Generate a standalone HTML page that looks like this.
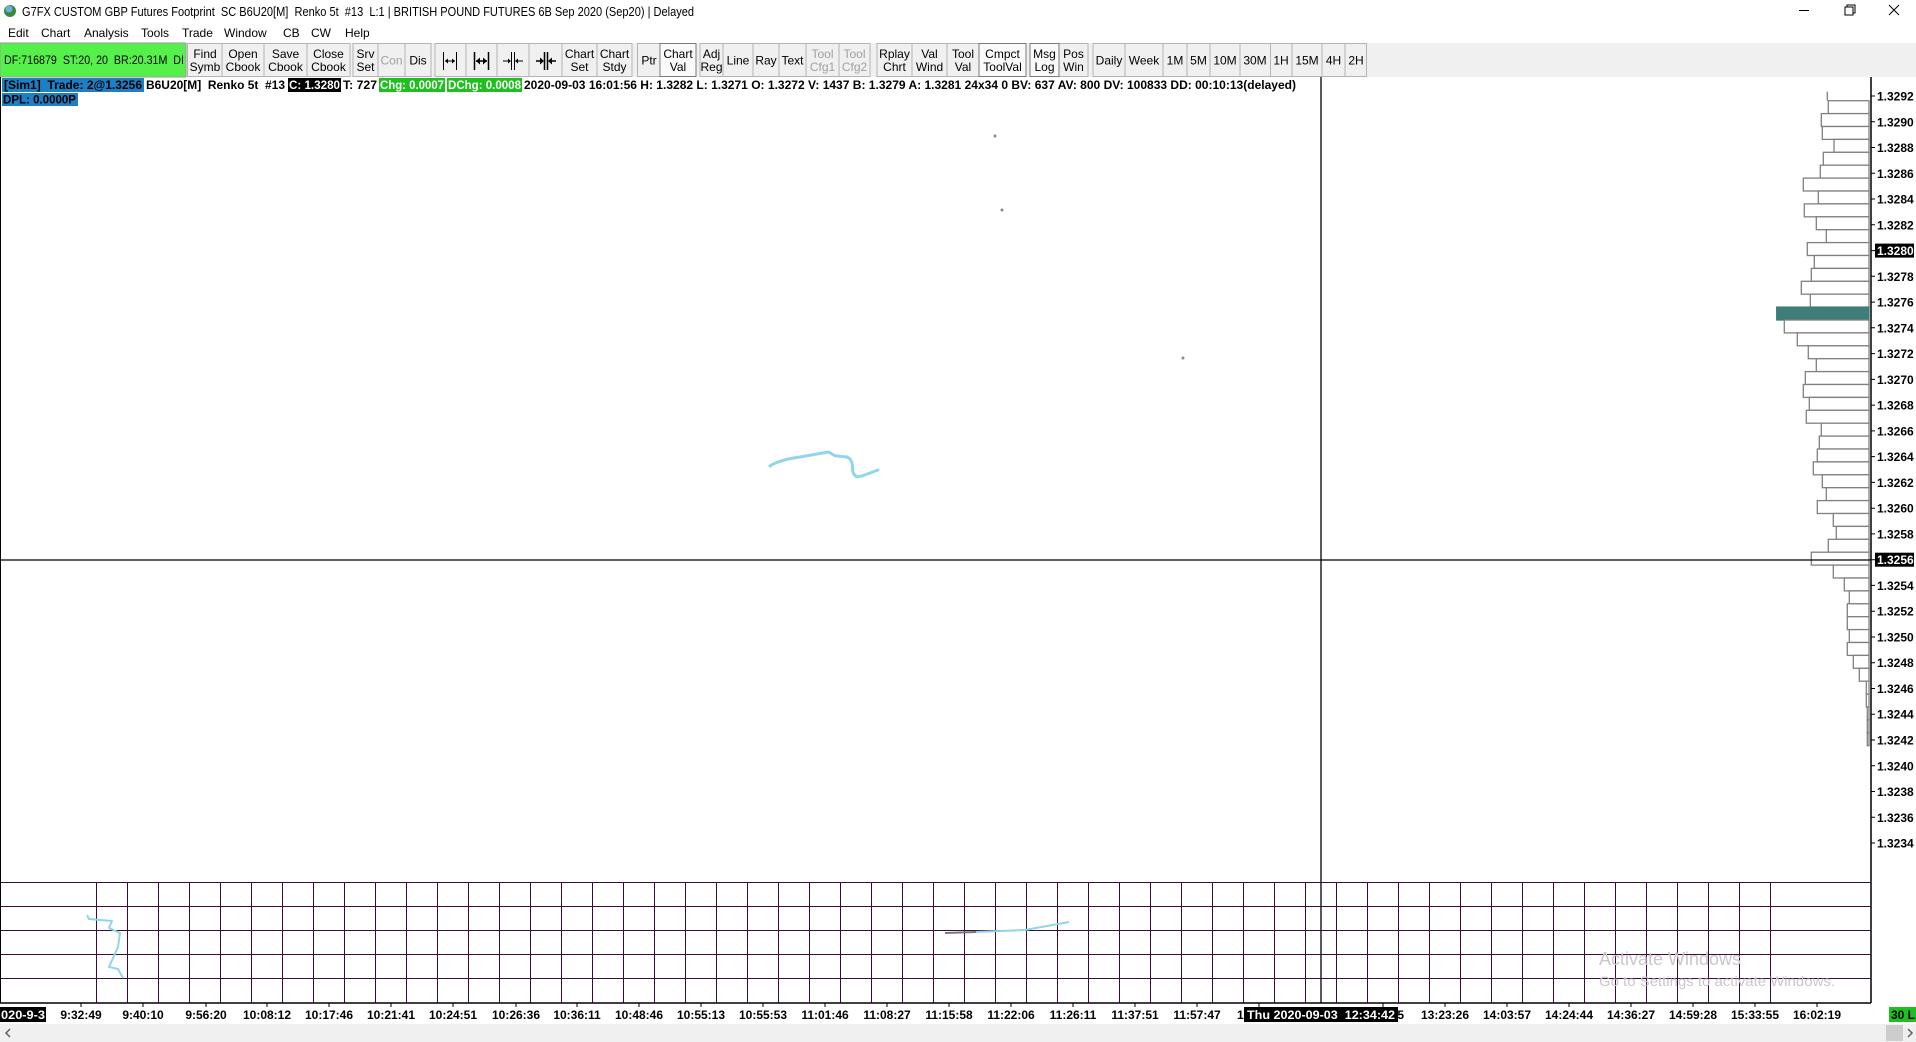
<!DOCTYPE html>
<html><head><meta charset="utf-8"><style>
html,body{margin:0;padding:0;width:1916px;height:1042px;overflow:hidden;background:#fff}
svg{display:block}
text{font-family:"Liberation Sans",Arial,sans-serif;font-size:12px;fill:#000;white-space:pre}
.b{font-weight:bold}
.g{fill:#a0a0a0}
</style></head><body>
<svg width="1916" height="1042" viewBox="0 0 1916 1042" xmlns="http://www.w3.org/2000/svg" xml:space="preserve">
<rect x="0" y="0" width="1916" height="43" fill="#fff"/>
<circle cx="10" cy="11" r="6" fill="#3a8a3a"/><circle cx="9" cy="9" r="3.5" fill="#6ab0e0"/>
<text x="22" y="16" textLength="672" lengthAdjust="spacingAndGlyphs" style="font-size:13px">G7FX CUSTOM GBP Futures Footprint  SC B6U20[M]  Renko 5t  #13  L:1 | BRITISH POUND FUTURES 6B Sep 2020 (Sep20) | Delayed</text>
<line x1="1799" y1="10.5" x2="1809" y2="10.5" stroke="#000"/>
<rect x="1845" y="7" width="8" height="8" fill="none" stroke="#000"/><path d="M1847 7 V5 H1855 V13 H1853" fill="none" stroke="#000"/>
<path d="M1889 5 L1899 15 M1899 5 L1889 15" stroke="#000"/>
<text x="8" y="37">Edit</text><text x="41" y="37">Chart</text><text x="84" y="37">Analysis</text><text x="141" y="37">Tools</text><text x="182" y="37">Trade</text><text x="224" y="37">Window</text><text x="283" y="37">CB</text><text x="311" y="37">CW</text><text x="345" y="37">Help</text>
<rect x="0" y="43" width="1916" height="34" fill="#f0f0f0"/>
<rect x="0" y="43" width="186" height="34" fill="#55f04a" stroke="#9a9a9a"/>
<text x="4" y="64" textLength="180" lengthAdjust="spacingAndGlyphs">DF:716879  ST:20, 20  BR:20.31M  DI</text>
<g fill="#f0f0f0" stroke="#b4b4b4">
<rect x="187.5" y="43.5" width="34.5" height="33"/><rect x="222" y="43.5" width="42" height="33"/><rect x="264" y="43.5" width="43" height="33"/><rect x="307" y="43.5" width="43" height="33"/>
<rect x="353" y="43.5" width="25" height="33"/><rect x="378" y="43.5" width="27" height="33"/><rect x="405" y="43.5" width="26" height="33"/>
<rect x="435" y="43.5" width="31" height="33"/><rect x="466" y="43.5" width="31" height="33"/><rect x="497" y="43.5" width="32" height="33"/><rect x="529" y="43.5" width="33" height="33"/><rect x="562" y="43.5" width="35" height="33"/><rect x="597" y="43.5" width="35" height="33"/>
<rect x="637.5" y="43.5" width="22.5" height="33"/>
<rect x="700" y="43.5" width="23" height="33"/><rect x="723" y="43.5" width="30" height="33"/><rect x="753" y="43.5" width="26" height="33"/><rect x="779" y="43.5" width="27" height="33"/><rect x="806" y="43.5" width="33" height="33"/><rect x="839" y="43.5" width="31" height="33"/>
<rect x="877" y="43.5" width="35" height="33"/><rect x="912" y="43.5" width="35" height="33"/><rect x="947" y="43.5" width="32" height="33"/><rect x="1059" y="43.5" width="29" height="33"/>
<rect x="1093" y="43.5" width="32" height="33"/><rect x="1125" y="43.5" width="38" height="33"/><rect x="1163" y="43.5" width="24" height="33"/><rect x="1187" y="43.5" width="23" height="33"/><rect x="1210" y="43.5" width="30" height="33"/><rect x="1240" y="43.5" width="30.5" height="33"/><rect x="1270.5" y="43.5" width="21.5" height="33"/><rect x="1292" y="43.5" width="30" height="33"/><rect x="1322" y="43.5" width="23" height="33"/><rect x="1345" y="43.5" width="21.5" height="33"/>
</g>
<g fill="#fafafa" stroke="#7a7a7a">
<rect x="660" y="43.5" width="36" height="33"/><rect x="979" y="43.5" width="47" height="33"/><rect x="1030" y="43.5" width="29" height="33"/>
</g>
<g text-anchor="middle">
<text x="205" y="58">Find</text><text x="205" y="71">Symb</text>
<text x="243" y="58">Open</text><text x="243" y="71">Cbook</text>
<text x="285.5" y="58">Save</text><text x="285.5" y="71">Cbook</text>
<text x="328.5" y="58">Close</text><text x="328.5" y="71">Cbook</text>
<text x="365.5" y="58">Srv</text><text x="365.5" y="71">Set</text>
<text x="391.5" y="64.5" class="g">Con</text>
<text x="418" y="64.5">Dis</text>
<text x="579.5" y="58">Chart</text><text x="579.5" y="71">Set</text>
<text x="614.5" y="58">Chart</text><text x="614.5" y="71">Stdy</text>
<text x="649" y="64.5">Ptr</text>
<text x="678" y="58">Chart</text><text x="678" y="71">Val</text>
<text x="711.5" y="58">Adj</text><text x="711.5" y="71">Reg</text>
<text x="738" y="64.5">Line</text><text x="766" y="64.5">Ray</text><text x="792.5" y="64.5">Text</text>
<text x="822.5" y="58" class="g">Tool</text><text x="822.5" y="71" class="g">Cfg1</text>
<text x="854.5" y="58" class="g">Tool</text><text x="854.5" y="71" class="g">Cfg2</text>
<text x="894.5" y="58">Rplay</text><text x="894.5" y="71">Chrt</text>
<text x="929.5" y="58">Val</text><text x="929.5" y="71">Wind</text>
<text x="963" y="58">Tool</text><text x="963" y="71">Val</text>
<text x="1002.5" y="58">Cmpct</text><text x="1002.5" y="71">ToolVal</text>
<text x="1044.5" y="58">Msg</text><text x="1044.5" y="71">Log</text>
<text x="1073.5" y="58">Pos</text><text x="1073.5" y="71">Win</text>
<text x="1109" y="64.5">Daily</text><text x="1144" y="64.5">Week</text><text x="1175" y="64.5">1M</text><text x="1198.5" y="64.5">5M</text><text x="1225" y="64.5">10M</text><text x="1255" y="64.5">30M</text><text x="1281" y="64.5">1H</text><text x="1307" y="64.5">15M</text><text x="1333.5" y="64.5">4H</text><text x="1356" y="64.5">2H</text>
</g>
<g stroke="#000" stroke-width="1" fill="#000">
<path d="M443.5 52 V70 M456.5 52 V70 M445 61 H455" fill="none"/><path d="M445 61 l3 -2.5 v5z M455 61 l-3 -2.5 v5z" stroke="none"/>
<path d="M474.5 52 V70 M488.5 52 V70 M476 61 H487" fill="none" stroke-width="1.5"/><path d="M476 61 l4 -3.5 v7z M487 61 l-4 -3.5 v7z" stroke="none"/>
<path d="M511.5 52 V70 M514.5 52 V70 M503 61 H510 M516 61 H523" fill="none"/><path d="M511 61 l-3 -2.5 v5z M515 61 l3 -2.5 v5z" stroke="none"/>
<path d="M544.5 52 V70 M547.5 52 V70 M536 61 H543 M549 61 H556" fill="none" stroke-width="1.5"/><path d="M544 61 l-4 -3.5 v7z M548 61 l4 -3.5 v7z" stroke="none"/>
</g>
<rect x="2" y="78" width="142" height="14" fill="#1f7fc4"/>
<text x="4" y="89" class="b" textLength="138" lengthAdjust="spacingAndGlyphs">[Sim1]  Trade: 2@1.3256</text>
<text x="146" y="89" class="b" textLength="139" lengthAdjust="spacingAndGlyphs">B6U20[M]  Renko 5t  #13</text>
<rect x="288" y="78" width="53" height="14" fill="#000"/>
<text x="289" y="89" class="b" style="fill:#fff" textLength="51" lengthAdjust="spacingAndGlyphs">C: 1.3280</text>
<text x="343" y="89" class="b" textLength="34" lengthAdjust="spacingAndGlyphs">T: 727</text>
<rect x="379" y="78" width="66" height="14" fill="#1fbf1f"/>
<text x="380" y="89" class="b" style="fill:#fff" textLength="64" lengthAdjust="spacingAndGlyphs">Chg: 0.0007</text>
<rect x="447" y="78" width="75" height="14" fill="#1fbf1f"/>
<text x="448" y="89" class="b" style="fill:#fff" textLength="73" lengthAdjust="spacingAndGlyphs">DChg: 0.0008</text>
<text x="524" y="89" class="b" textLength="772" lengthAdjust="spacingAndGlyphs">2020-09-03 16:01:56 H: 1.3282 L: 1.3271 O: 1.3272 V: 1437 B: 1.3279 A: 1.3281 24x34 0 BV: 637 AV: 800 DV: 100833 DD: 00:10:13(delayed)</text>
<rect x="2" y="93" width="76" height="13" fill="#1f7fc4"/>
<text x="3" y="103.5" class="b" textLength="73" lengthAdjust="spacingAndGlyphs">DPL: 0.0000P</text>
<g fill="#888"><circle cx="995" cy="136" r="1.5"/><circle cx="1002" cy="210" r="1.5"/><circle cx="1183" cy="358" r="1.5"/></g>
<path d="M770 466 C776 462 785 459 800 457 L828 452 C832 453 833 456 837 456 L847 457 C854 460 852 468 853 472 C855 478 858 477 862 476 L878 470" fill="none" stroke="#8fd6ea" stroke-width="3" stroke-linecap="round"/>
<g fill="#fff" stroke="#808080" stroke-width="1.3">
<path d="M1827.3 91.7 V100.7" fill="none"/>
<rect x="1828.3" y="100.7" width="40.7" height="12.9"/><rect x="1821.3" y="113.6" width="47.7" height="12.9"/><rect x="1822.3" y="126.5" width="46.7" height="12.9"/><rect x="1834" y="139.4" width="35" height="12.9"/><rect x="1823.3" y="152.3" width="45.7" height="12.9"/><rect x="1820.3" y="165.2" width="48.7" height="12.9"/><rect x="1803.3" y="178.1" width="65.7" height="12.9"/><rect x="1818.3" y="191" width="50.7" height="12.9"/><rect x="1804.3" y="203.9" width="64.7" height="12.9"/><rect x="1816.3" y="216.8" width="52.7" height="12.9"/><rect x="1826.3" y="229.7" width="42.7" height="12.9"/><rect x="1807.3" y="242.6" width="61.7" height="12.9"/><rect x="1814.3" y="255.5" width="54.7" height="12.9"/><rect x="1811.3" y="268.4" width="57.7" height="12.9"/><rect x="1801.3" y="281.3" width="67.7" height="12.9"/><rect x="1810.3" y="294.2" width="58.7" height="12.9"/>
<rect x="1776.7" y="307.1" width="92.3" height="12.9" fill="#3f7d79" stroke="#3f7d79"/>
<rect x="1784.3" y="320" width="84.7" height="12.9"/><rect x="1797.3" y="332.9" width="71.7" height="12.9"/><rect x="1808.3" y="345.8" width="60.7" height="12.9"/><rect x="1816.3" y="358.7" width="52.7" height="12.9"/><rect x="1805.3" y="371.6" width="63.7" height="12.9"/><rect x="1803.3" y="384.5" width="65.7" height="12.9"/><rect x="1809.3" y="397.4" width="59.7" height="12.9"/><rect x="1806.3" y="410.3" width="62.7" height="12.9"/><rect x="1821.3" y="423.2" width="47.7" height="12.9"/><rect x="1819.3" y="436.1" width="49.7" height="12.9"/><rect x="1817.3" y="449" width="51.7" height="12.9"/><rect x="1813.3" y="461.9" width="55.7" height="12.9"/><rect x="1822.3" y="474.8" width="46.7" height="12.9"/><rect x="1826.3" y="487.7" width="42.7" height="12.9"/><rect x="1817.3" y="500.6" width="51.7" height="12.9"/><rect x="1833.3" y="513.5" width="35.7" height="12.9"/><rect x="1836.3" y="526.4" width="32.7" height="12.9"/><rect x="1828.3" y="539.3" width="40.7" height="12.9"/><rect x="1811.3" y="552.2" width="57.7" height="12.9"/><rect x="1833.3" y="565.1" width="35.7" height="12.9"/><rect x="1844.3" y="578" width="24.7" height="12.9"/><rect x="1849.3" y="590.9" width="19.7" height="12.9"/><rect x="1847.3" y="603.8" width="21.7" height="12.9"/><rect x="1847.3" y="616.7" width="21.7" height="12.9"/><rect x="1849.3" y="629.6" width="19.7" height="12.9"/><rect x="1847.3" y="642.5" width="21.7" height="12.9"/><rect x="1853.3" y="655.4" width="15.7" height="12.9"/><rect x="1859.3" y="668.3" width="9.7" height="12.9"/><rect x="1866.3" y="681.2" width="2.7" height="12.9"/><rect x="1866.3" y="694.1" width="2.7" height="12.9"/><rect x="1867.3" y="707" width="1.7" height="12.9"/><rect x="1867.3" y="719.9" width="1.7" height="12.9"/><rect x="1867.3" y="732.8" width="1.7" height="12.9"/>
</g>
<line x1="1871" y1="77" x2="1871" y2="1003" stroke="#000" stroke-width="1.5"/>
<g stroke="#000"><path d="M1871 96H1875M1871 121.8H1875M1871 147.5H1875M1871 173.3H1875M1871 199H1875M1871 224.8H1875M1871 250.6H1875M1871 276.3H1875M1871 302.1H1875M1871 327.8H1875M1871 353.6H1875M1871 379.4H1875M1871 405.1H1875M1871 430.9H1875M1871 456.6H1875M1871 482.4H1875M1871 508.2H1875M1871 533.9H1875M1871 559.7H1875M1871 585.4H1875M1871 611.2H1875M1871 637H1875M1871 662.7H1875M1871 688.5H1875M1871 714.2H1875M1871 740H1875M1871 765.8H1875M1871 791.5H1875M1871 817.3H1875M1871 843H1875"/></g>
<rect x="1875" y="243.6" width="39" height="14" fill="#000"/><rect x="1875" y="552.7" width="39" height="14" fill="#000"/>
<g style="font-weight:bold">
<text x="1877" y="100.5">1.3292</text><text x="1877" y="126.3">1.3290</text><text x="1877" y="152">1.3288</text><text x="1877" y="177.8">1.3286</text><text x="1877" y="203.5">1.3284</text><text x="1877" y="229.3">1.3282</text><text x="1877" y="255.1" style="fill:#fff">1.3280</text><text x="1877" y="280.8">1.3278</text><text x="1877" y="306.6">1.3276</text><text x="1877" y="332.3">1.3274</text><text x="1877" y="358.1">1.3272</text><text x="1877" y="383.9">1.3270</text><text x="1877" y="409.6">1.3268</text><text x="1877" y="435.4">1.3266</text><text x="1877" y="461.1">1.3264</text><text x="1877" y="486.9">1.3262</text><text x="1877" y="512.7">1.3260</text><text x="1877" y="538.4">1.3258</text><text x="1877" y="564.2" style="fill:#fff">1.3256</text><text x="1877" y="589.9">1.3254</text><text x="1877" y="615.7">1.3252</text><text x="1877" y="641.5">1.3250</text><text x="1877" y="667.2">1.3248</text><text x="1877" y="693">1.3246</text><text x="1877" y="718.7">1.3244</text><text x="1877" y="744.5">1.3242</text><text x="1877" y="770.3">1.3240</text><text x="1877" y="796">1.3238</text><text x="1877" y="821.8">1.3236</text><text x="1877" y="847.5">1.3234</text>
</g>
<g stroke="#3a0a3a" stroke-width="1" shape-rendering="crispEdges">
<path d="M0 882.5H1871M0 906.5H1871M0 930.5H1871M0 954.5H1871M0 978.5H1871"/>
<path d="M96.5 882V1003M127.5 882V1003M158.5 882V1003M189.5 882V1003M220.5 882V1003M251.5 882V1003M282.5 882V1003M313.5 882V1003M344.5 882V1003M375.5 882V1003M406.5 882V1003M437.5 882V1003M468.5 882V1003M499.5 882V1003M530.5 882V1003M561.5 882V1003M592.5 882V1003M623.5 882V1003M654.5 882V1003M685.5 882V1003M716.5 882V1003M747.5 882V1003M778.5 882V1003M809.5 882V1003M840.5 882V1003M871.5 882V1003M902.5 882V1003M933.5 882V1003M964.5 882V1003M995.5 882V1003M1026.5 882V1003M1057.5 882V1003M1088.5 882V1003M1119.5 882V1003M1150.5 882V1003M1181.5 882V1003M1212.5 882V1003M1243.5 882V1003M1274.5 882V1003M1305.5 882V1003M1336.5 882V1003M1367.5 882V1003M1398.5 882V1003M1429.5 882V1003M1460.5 882V1003M1491.5 882V1003M1522.5 882V1003M1553.5 882V1003M1584.5 882V1003M1615.5 882V1003M1646.5 882V1003M1677.5 882V1003M1708.5 882V1003M1739.5 882V1003M1770.5 882V1003"/>
</g>
<line x1="0" y1="1003" x2="1871" y2="1003" stroke="#000" stroke-width="1.5"/>
<line x1="0.5" y1="77" x2="0.5" y2="1003" stroke="#000"/>
<line x1="0" y1="560" x2="1871" y2="560" stroke="#000" stroke-width="1.3"/>
<line x1="1321" y1="77" x2="1321" y2="1003" stroke="#000" stroke-width="1.3"/>
<path d="M87 915 L89 919 L112 921 L109 928 L120 933 L118 947 L109 967 L118 969 L123 978" fill="none" stroke="#8fd6ea" stroke-width="2" stroke-linejoin="round"/>
<path d="M975 932 L1025 930 L1069 922" fill="none" stroke="#8fd6ea" stroke-width="2"/>
<path d="M945 933 L976 932" fill="none" stroke="#777" stroke-width="2"/>
<text x="1599" y="965" style="font-size:18px;fill:#c8c8c8">Activate Windows</text>
<text x="1599" y="986" style="font-size:13.5px;fill:#c8c8c8" textLength="236" lengthAdjust="spacingAndGlyphs">Go to Settings to activate Windows.</text>
<g stroke="#000"><path d="M81 1003V1007M143 1003V1007M206 1003V1007M267 1003V1007M329 1003V1007M391 1003V1007M453 1003V1007M516 1003V1007M577 1003V1007M639 1003V1007M701 1003V1007M763 1003V1007M825 1003V1007M887 1003V1007M949 1003V1007M1011 1003V1007M1073 1003V1007M1135 1003V1007M1197 1003V1007M1259 1003V1007M1383 1003V1007M1445 1003V1007M1507 1003V1007M1569 1003V1007M1631 1003V1007M1693 1003V1007M1755 1003V1007M1817 1003V1007"/></g>
<g style="font-weight:bold" text-anchor="middle">
<text x="81" y="1019">9:32:49</text><text x="143" y="1019">9:40:10</text><text x="206" y="1019">9:56:20</text><text x="267" y="1019">10:08:12</text><text x="329" y="1019">10:17:46</text><text x="391" y="1019">10:21:41</text><text x="453" y="1019">10:24:51</text><text x="516" y="1019">10:26:36</text><text x="577" y="1019">10:36:11</text><text x="639" y="1019">10:48:46</text><text x="701" y="1019">10:55:13</text><text x="763" y="1019">10:55:53</text><text x="825" y="1019">11:01:46</text><text x="887" y="1019">11:08:27</text><text x="949" y="1019">11:15:58</text><text x="1011" y="1019">11:22:06</text><text x="1073" y="1019">11:26:11</text><text x="1135" y="1019">11:37:51</text><text x="1197" y="1019">11:57:47</text><text x="1261" y="1019">12:05:31</text><text x="1380" y="1019">12:55:15</text><text x="1445" y="1019">13:23:26</text><text x="1507" y="1019">14:03:57</text><text x="1569" y="1019">14:24:44</text><text x="1631" y="1019">14:36:27</text><text x="1693" y="1019">14:59:28</text><text x="1755" y="1019">15:33:55</text><text x="1817" y="1019">16:02:19</text>
</g>
<rect x="0" y="1007" width="46" height="15" fill="#000"/>
<text x="1" y="1019" style="font-weight:bold;fill:#fff" textLength="44" lengthAdjust="spacingAndGlyphs">020-9-3</text>
<rect x="1244" y="1007" width="154" height="15" fill="#000"/>
<text x="1247" y="1019" style="font-weight:bold;fill:#fff" textLength="148" lengthAdjust="spacingAndGlyphs">Thu 2020-09-03  12:34:42</text>
<rect x="1889" y="1007" width="27" height="15" fill="#1fbf1f"/>
<text x="1891" y="1019" style="font-weight:bold">30 L</text>
<rect x="0" y="1024" width="1916" height="18" fill="#f0f0f0"/>
<path d="M10 1029 L6 1033 L10 1037" fill="none" stroke="#606060" stroke-width="1.5"/>
<rect x="1886" y="1025" width="17" height="16" fill="#cdcdcd"/>
<path d="M1908 1029 L1912 1033 L1908 1037" fill="none" stroke="#606060" stroke-width="1.5"/>
</svg>
</body></html>
